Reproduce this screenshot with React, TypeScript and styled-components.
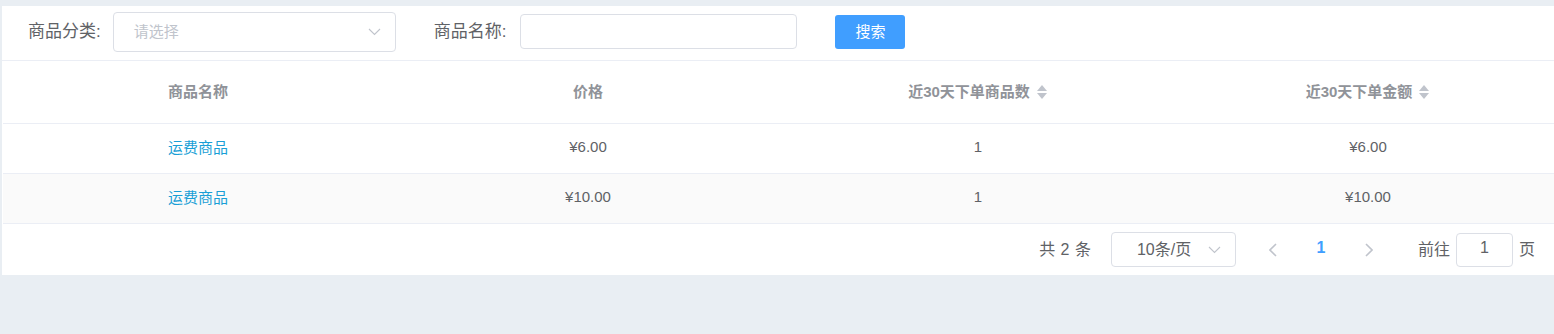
import React from 'react'
import styled, { createGlobalStyle } from 'styled-components'

const GlobalStyle = createGlobalStyle`
  html, body {
    margin: 0;
    padding: 0;
    background: #e9eef3;
    overflow: hidden;
  }
  body {
    font-family: "Liberation Sans", "Noto Sans CJK SC", sans-serif;
    color: #606266;
  }
`

const Page = styled.div`
  width: 1554px;
  height: 334px;
  padding: 6px 0 0 2px;
  box-sizing: border-box;
  background: #e9eef3;
`

const Panel = styled.div`
  width: 1560px;
  background: #fff;
`

const FilterBar = styled.div`
  display: flex;
  align-items: center;
  height: 55px;
  box-sizing: border-box;
  padding: 0 0 3px 26px;
  border-bottom: 1px solid #ebeef5;
`

const Label = styled.span`
  font-size: 17px;
  color: #606266;
  margin-right: 12px;
  padding-bottom: 4px;
`

const Select = styled.div<{ $width: number; $height: number }>`
  display: flex;
  align-items: center;
  justify-content: space-between;
  box-sizing: border-box;
  width: ${(p) => p.$width}px;
  height: ${(p) => p.$height}px;
  border: 1px solid #dcdfe6;
  border-radius: 4px;
  background: #fff;
`

const Placeholder = styled.span`
  font-size: 15px;
  color: #c0c4cc;
  padding: 0 0 3px 20px;
`

const Arrow = styled.svg`
  margin-right: 14px;
  flex-shrink: 0;
`

const TextInput = styled.div`
  width: 277px;
  height: 35px;
  box-sizing: border-box;
  border: 1px solid #dcdfe6;
  border-radius: 4px;
  margin: 0 38px 0 2px;
`

const Field = styled.div<{ $gap: number }>`
  display: flex;
  align-items: center;
  margin-right: ${(p) => p.$gap}px;
`

const SearchButton = styled.button`
  width: 70px;
  height: 34px;
  border: none;
  border-radius: 3px;
  background: #409eff;
  color: #fff;
  font-family: inherit;
  font-size: 15px;
  padding: 0 0 3px;
`

const Grid = styled.div`
  display: grid;
  grid-template-columns: repeat(4, 390px);
  padding-left: 1px;
`

const HeadCell = styled.div`
  display: flex;
  align-items: center;
  justify-content: center;
  box-sizing: border-box;
  height: 63px;
  padding-bottom: 4px;
  border-bottom: 1px solid #ebeef5;
  font-size: 15px;
  font-weight: bold;
  color: #909399;
`

const Cell = styled.div<{ $striped?: boolean; $link?: boolean }>`
  display: flex;
  align-items: center;
  justify-content: center;
  box-sizing: border-box;
  height: 50px;
  padding-bottom: 4px;
  border-bottom: 1px solid #ebeef5;
  font-size: 15px;
  color: ${(p) => (p.$link ? '#1a9fd6' : '#606266')};
  background: ${(p) => (p.$striped ? '#fafafa' : '#fff')};
`

const SortIcon = styled.svg`
  margin: 4px 0 0 6px;
`

const Pager = styled.div`
  display: flex;
  align-items: center;
  justify-content: flex-end;
  height: 51px;
  width: 1554px;
  box-sizing: border-box;
  padding-right: 21px;
  font-size: 16px;
  color: #606266;
`

const PagerText = styled.span`
  padding-bottom: 3px;
`

const Total = styled(PagerText)`
  margin-right: 20px;
  word-spacing: 1px;
`

const SizeText = styled.span`
  font-size: 16px;
  color: #606266;
  padding: 0 0 3px 25px;
`

const PagerArrow = styled.svg<{ $left: number }>`
  margin-left: ${(p) => p.$left}px;
  flex-shrink: 0;
`

const PageNum = styled(PagerText)`
  width: 88px;
  text-align: center;
  color: #409eff;
  font-weight: bold;
`

const JumpBox = styled.div`
  width: 57px;
  height: 34px;
  box-sizing: border-box;
  border: 1px solid #dcdfe6;
  border-radius: 4px;
  display: flex;
  align-items: center;
  justify-content: center;
  padding-bottom: 3px;
  margin: 0 6px 0 6px;
`

const Jump = styled(PagerText)`
  margin-left: 45px;
`

const DownArrow = () => (
  <Arrow width="13" height="8" viewBox="0 0 13 8">
    <path d="M1 1l5.5 5.5L12 1" fill="none" stroke="#c0c4cc" strokeWidth="1.1" />
  </Arrow>
)

const Sort = () => (
  <SortIcon width="12" height="16" viewBox="0 0 12 16">
    <path d="M6 1l5 6H1z" fill="#c0c4cc" />
    <path d="M6 15l5-6H1z" fill="#c0c4cc" />
  </SortIcon>
)

const rows = [
  { name: '运费商品', price: '¥6.00', count: '1', amount: '¥6.00' },
  { name: '运费商品', price: '¥10.00', count: '1', amount: '¥10.00' },
]

export default function App() {
  return (
    <Page>
      <GlobalStyle />
      <Panel>
        <FilterBar>
          <Field $gap={38}>
            <Label>商品分类:</Label>
            <Select $width={283} $height={40}>
              <Placeholder>请选择</Placeholder>
              <DownArrow />
            </Select>
          </Field>
          <Field $gap={0}>
            <Label>商品名称:</Label>
            <TextInput />
          </Field>
          <SearchButton>搜索</SearchButton>
        </FilterBar>
        <Grid>
          <HeadCell>商品名称</HeadCell>
          <HeadCell>价格</HeadCell>
          <HeadCell>
            近30天下单商品数
            <Sort />
          </HeadCell>
          <HeadCell>
            近30天下单金额
            <Sort />
          </HeadCell>
          {rows.map((r, i) => (
            <React.Fragment key={i}>
              <Cell $striped={i % 2 === 1} $link>
                {r.name}
              </Cell>
              <Cell $striped={i % 2 === 1}>{r.price}</Cell>
              <Cell $striped={i % 2 === 1}>{r.count}</Cell>
              <Cell $striped={i % 2 === 1}>{r.amount}</Cell>
            </React.Fragment>
          ))}
        </Grid>
        <Pager>
          <Total>共 2 条</Total>
          <Select $width={125} $height={35}>
            <SizeText>10条/页</SizeText>
            <DownArrow />
          </Select>
          <PagerArrow $left={33} width="8" height="14" viewBox="0 0 8 14">
            <path d="M7 1L1 7l6 6" fill="none" stroke="#c0c4cc" strokeWidth="1.6" />
          </PagerArrow>
          <PageNum>1</PageNum>
          <PagerArrow $left={0} width="8" height="14" viewBox="0 0 8 14">
            <path d="M1 1l6 6-6 6" fill="none" stroke="#c0c4cc" strokeWidth="1.6" />
          </PagerArrow>
          <Jump>前往</Jump>
          <JumpBox>1</JumpBox>
          <PagerText>页</PagerText>
        </Pager>
      </Panel>
    </Page>
  )
}
